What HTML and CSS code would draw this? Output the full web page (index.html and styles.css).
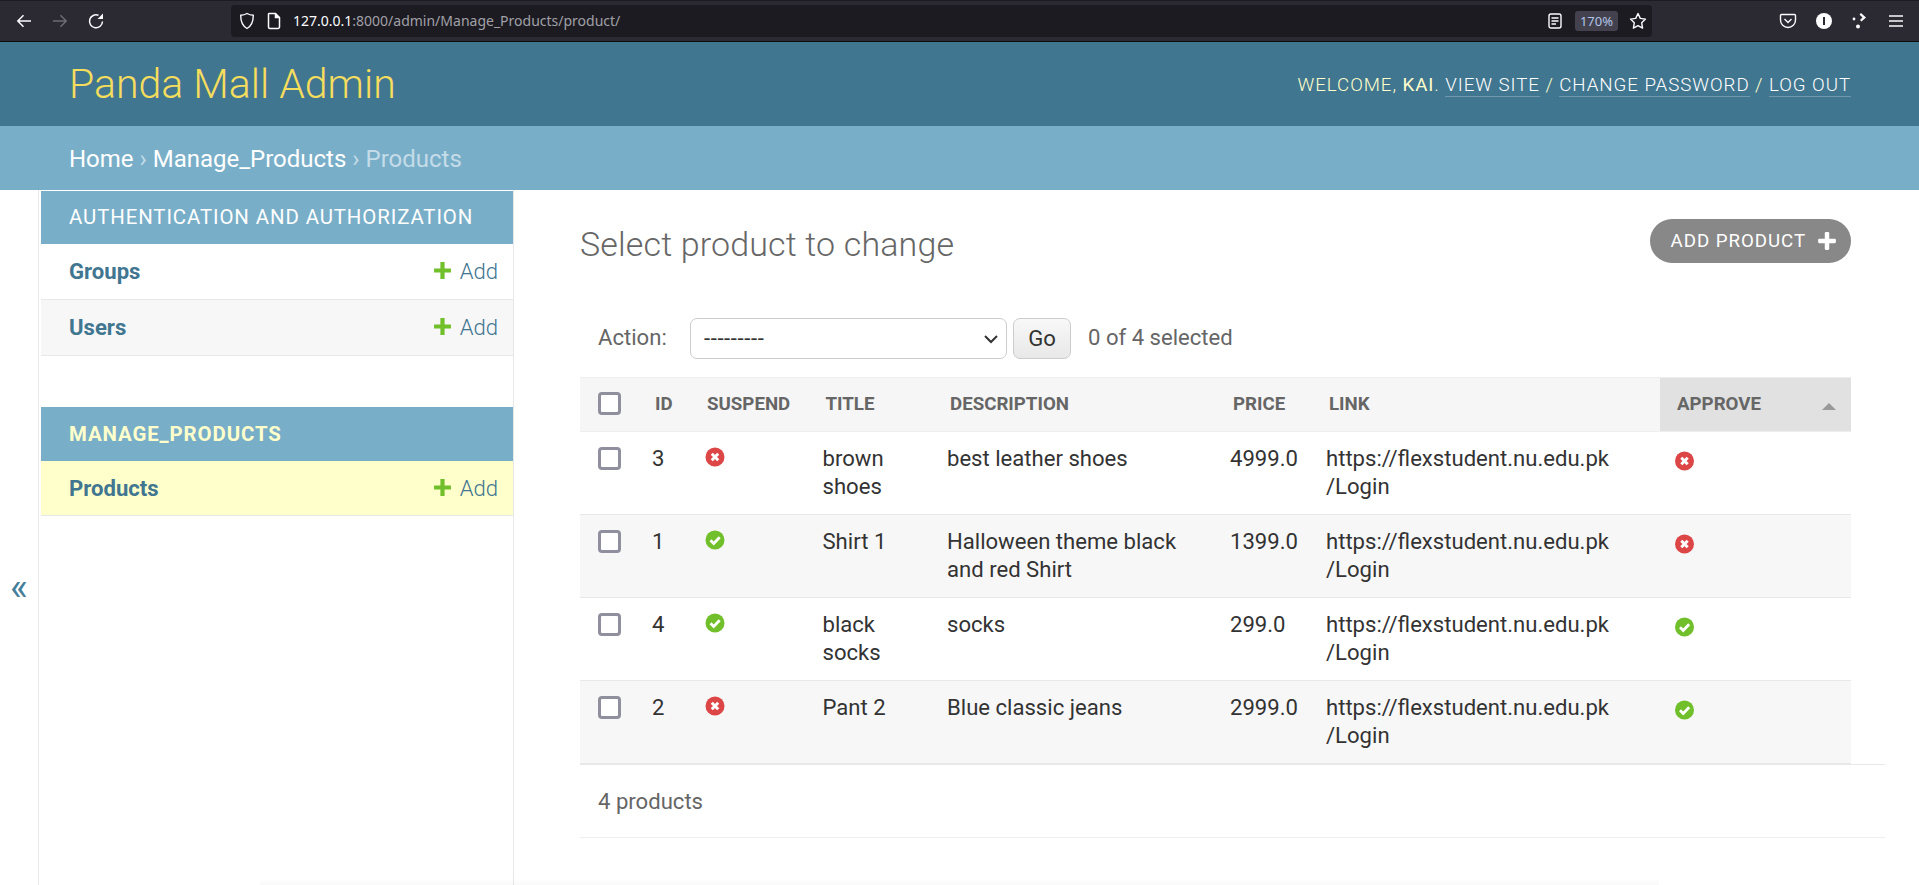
FILE: index.html
```html
<!DOCTYPE html>
<html lang="en">
<head>
  <meta charset="utf-8" />
  <title>Select product to change | Panda Mall Admin</title>
  <link rel="stylesheet" href="styles.css">
</head>
<body>
  <div class="browser-bar">
    <svg class="tb-icon" width="18" height="18" viewBox="0 0 18 18" fill="none" stroke="#fbfbfe" stroke-width="1.5"><path d="M16 9H3M8.5 3.2 2.8 9l5.7 5.8"/></svg>
    <svg class="tb-icon" width="18" height="18" viewBox="0 0 18 18" fill="none" stroke="#6d6c74" stroke-width="1.5"><path d="M2 9h13M9.5 3.2 15.2 9l-5.700 5.800"/></svg>
    <svg class="tb-icon" width="18" height="18" viewBox="0 0 18 18" fill="none" stroke="#fbfbfe" stroke-width="1.500"><path d="M15.500 9.500A6.500 6.500 0 1 1 11.500 3.300"/><path d="M16 1.500V7h-5.500z" fill="#fbfbfe" stroke="none"/></svg>
    <div class="url-bar">
      <svg width="16" height="18" viewBox="0 0 16 18" fill="none" stroke="#fbfbfe" stroke-width="1.400"><path d="M8 1.500c2 1.200 4 1.700 6.300 1.800 0 6-1.300 10.500-6.300 13.200C3 13.800 1.700 9.300 1.700 3.300 4 3.200 6 2.700 8 1.500z"/></svg>
      <svg class="page-icon" width="14" height="18" viewBox="0 0 14 18" fill="none" stroke="#fbfbfe" stroke-width="1.500"><path d="M2 1.500h6.500l4 4V15a1.500 1.500 0 0 1-1.500 1.500H3A1.500 1.500 0 0 1 1.500 15V2z"/><path d="M8.500 1.500v4h4" fill="#fbfbfe"/></svg>
      <span class="url-text"><b>127.0.0.1</b>:8000/admin/Manage_Products/product/</span>
      <svg class="reader-icon" width="14" height="18" viewBox="0 0 14 18" fill="none" stroke="#fbfbfe" stroke-width="1.400"><rect x="1" y="2" width="12" height="14" rx="2"/><path d="M3.500 6h7M3.500 9h7M3.500 12h4.500"/></svg>
      <span class="zoom-pill">170%</span>
      <svg class="star-icon" width="18" height="18" viewBox="0 0 18 18" fill="none" stroke="#fbfbfe" stroke-width="1.400" stroke-linejoin="round"><path d="m9 1.500 2.300 4.900 5.200.7-3.800 3.700.9 5.300L9 13.600l-4.600 2.500.9-5.300L1.500 7.100l5.200-.7z"/></svg>
    </div>
    <div class="tb-right">
      <svg width="18" height="18" viewBox="0 0 18 18" fill="none" stroke="#fbfbfe" stroke-width="1.400"><path d="M2.500 2.500h13a1 1 0 0 1 1 1V8A7.500 7.500 0 0 1 1.500 8V3.500a1 1 0 0 1 1-1z"/><path d="m5.500 7 3.500 3.500L12.500 7"/></svg>
      <svg width="18" height="18" viewBox="0 0 18 18"><circle cx="9" cy="9" r="8" fill="#fff"/><rect x="8" y="5" width="2" height="8" fill="#2b2a33"/></svg>
      <svg width="18" height="18" viewBox="0 0 18 18" fill="#fbfbfe"><path d="m10 1 5 4.500-4.500 4-1.500-1.500 2.500-2.500L8.500 2.500z"/><circle cx="3" cy="7" r="1.400"/><circle cx="7" cy="14.500" r="2"/></svg>
      <svg width="18" height="18" viewBox="0 0 18 18" stroke="#fbfbfe" stroke-width="1.500"><path d="M2 4h14M2 9h14M2 14h14"/></svg>
    </div>
  </div>

  <header class="site-header">
    <h1 class="site-name">Panda Mall Admin</h1>
    <div class="user-tools">
      Welcome, <strong>Kai</strong>. <a href="#">View site</a> / <a href="#">Change password</a> / <a href="#">Log out</a>
    </div>
  </header>

  <div class="breadcrumbs">
    <a href="#">Home</a> <span class="sep">›</span> <a href="#">Manage_Products</a> <span class="sep">›</span> Products
  </div>

  <div class="layout">
    <button class="nav-toggle" type="button">«</button>

    <nav class="sidebar">
      <div class="module">
        <div class="caption">Authentication and Authorization</div>
        <div class="nav-row">
          <a class="nav-link" href="#">Groups</a>
          <a class="add-link" href="#">
            <svg class="plus" viewBox="0 0 18 18"><path d="M7 1h4v6h6v4h-6v6H7v-6H1V7h6z"/></svg>Add</a>
        </div>
        <div class="nav-row alt">
          <a class="nav-link" href="#">Users</a>
          <a class="add-link" href="#">
            <svg class="plus" viewBox="0 0 18 18"><path d="M7 1h4v6h6v4h-6v6H7v-6H1V7h6z"/></svg>Add</a>
        </div>
      </div>
      <div class="module current">
        <div class="caption">Manage_Products</div>
        <div class="nav-row selected">
          <a class="nav-link" href="#">Products</a>
          <a class="add-link" href="#">
            <svg class="plus" viewBox="0 0 18 18"><path d="M7 1h4v6h6v4h-6v6H7v-6H1V7h6z"/></svg>Add</a>
        </div>
      </div>
    </nav>

    <main class="content">
      <div class="title-row">
        <h2 class="page-title">Select product to change</h2>
        <a class="add-button" href="#">Add product
          <svg class="plus-white" viewBox="0 0 18 18"><path d="M7 1.500a1 1 0 0 1 1-.500h2a1 1 0 0 1 1 1V7h5a1 1 0 0 1 1 1v2a1 1 0 0 1-1 1h-5v5a1 1 0 0 1-1 1H8a1 1 0 0 1-1-1v-5H2a1 1 0 0 1-1-1V8a1 1 0 0 1 1-1h5z"/></svg>
        </a>
      </div>

      <div class="actions">
        <label class="action-label">Action:</label>
        <span class="select-wrap">
          <select class="action-select"><option>---------</option></select>
          <svg class="select-arrow" width="14" height="9" viewBox="0 0 14 9" fill="none" stroke="#333" stroke-width="2"><path d="m1 1 6 6 6-6"/></svg>
        </span>
        <button class="go-button" type="button">Go</button>
        <span class="selected-count">0 of 4 selected</span>
      </div>

      <table class="results">
        <colgroup>
          <col class="c-check"><col class="c-id"><col class="c-suspend"><col class="c-title">
          <col class="c-desc"><col class="c-price"><col class="c-link"><col class="c-approve">
        </colgroup>
        <thead>
          <tr>
            <th><input class="check" type="checkbox"></th>
            <th>ID</th>
            <th>Suspend</th>
            <th>Title</th>
            <th>Description</th>
            <th>Price</th>
            <th>Link</th>
            <th class="sorted">Approve<span class="sort-arrow"></span></th>
          </tr>
        </thead>
        <tbody>
          <tr>
            <td><input class="check" type="checkbox"></td>
            <td>3</td>
            <td><svg class="bool" viewBox="0 0 20 20"><use href="#icon-no"/></svg></td>
            <td>brown shoes</td>
            <td>best leather shoes</td>
            <td>4999.0</td>
            <td>https://flexstudent.nu.edu.pk<wbr>/Login</td>
            <td><svg class="bool low" viewBox="0 0 20 20"><use href="#icon-no"/></svg></td>
          </tr>
          <tr class="alt">
            <td><input class="check" type="checkbox"></td>
            <td>1</td>
            <td><svg class="bool" viewBox="0 0 20 20"><use href="#icon-yes"/></svg></td>
            <td>Shirt 1</td>
            <td>Halloween theme black and red Shirt</td>
            <td>1399.0</td>
            <td>https://flexstudent.nu.edu.pk<wbr>/Login</td>
            <td><svg class="bool low" viewBox="0 0 20 20"><use href="#icon-no"/></svg></td>
          </tr>
          <tr>
            <td><input class="check" type="checkbox"></td>
            <td>4</td>
            <td><svg class="bool" viewBox="0 0 20 20"><use href="#icon-yes"/></svg></td>
            <td>black socks</td>
            <td>socks</td>
            <td>299.0</td>
            <td>https://flexstudent.nu.edu.pk<wbr>/Login</td>
            <td><svg class="bool low" viewBox="0 0 20 20"><use href="#icon-yes"/></svg></td>
          </tr>
          <tr class="alt">
            <td><input class="check" type="checkbox"></td>
            <td>2</td>
            <td><svg class="bool" viewBox="0 0 20 20"><use href="#icon-no"/></svg></td>
            <td>Pant 2</td>
            <td>Blue classic jeans</td>
            <td>2999.0</td>
            <td>https://flexstudent.nu.edu.pk<wbr>/Login</td>
            <td><svg class="bool low" viewBox="0 0 20 20"><use href="#icon-yes"/></svg></td>
          </tr>
        </tbody>
      </table>

      <p class="paginator">4 products</p>
    </main>
  </div>

  <div class="bottom-shade"></div>

  <svg class="icon-defs" width="0" height="0">
    <symbol id="icon-no" viewBox="0 0 20 20">
      <circle cx="10" cy="10" r="9.500" fill="#dd4646"/>
      <path d="m6.800 6.800 6.400 6.400m0-6.400-6.400 6.400" stroke="#fff" stroke-width="3"/>
    </symbol>
    <symbol id="icon-yes" viewBox="0 0 20 20">
      <circle cx="10" cy="10" r="9.500" fill="#70bf2b"/>
      <path d="m5.500 10.300 3.200 3.200 6-6.300" fill="none" stroke="#fff" stroke-width="2.800"/>
    </symbol>
  </svg>
</body>
</html>
```

FILE: styles.css
```css
* {
  box-sizing: border-box;
  margin: 0;
  padding: 0;
}

html, body {
  height: 885px;
  overflow: hidden;
}

body {
  position: relative;
  display: flex;
  flex-direction: column;
  font-family: Roboto, 'Liberation Sans', sans-serif;
  font-size: 22.1px;
  color: #333;
  background: #fff;
}

a {
  text-decoration: none;
}

/* browser chrome */
.browser-bar {
  display: flex;
  align-items: center;
  flex: none;
  height: 42px;
  padding: 0 14px 1px 15px;
  background: #2b2a33;
  border-top: 1px solid #1c1b22;
  border-bottom: 1px solid #0c0c0d;
}

.tb-icon {
  margin-right: 18px;
}

.url-bar {
  display: flex;
  align-items: center;
  flex: none;
  width: 1421px;
  height: 32px;
  margin-left: 108px;
  padding: 0 5px 0 8px;
  background: #1c1b22;
  border-radius: 4px;
  font-family: 'Noto Sans', sans-serif;
  font-size: 14px;
  color: #a0a0a6;
}

.page-icon {
  margin-left: 12px;
}

.url-text {
  margin-left: 12px;
  flex: 1;
}

.url-text b {
  font-weight: 400;
  color: #fbfbfe;
}

.zoom-pill {
  width: 43px;
  height: 20px;
  margin: 0 11px 0 13px;
  line-height: 20px;
  text-align: center;
  font-size: 13px;
  color: #b3c5ea;
  background: #42414d;
  border-radius: 3px;
}

.tb-right {
  display: flex;
  gap: 18px;
  margin-left: 127px;
}

/* header */
.site-header {
  display: flex;
  align-items: center;
  justify-content: space-between;
  flex: none;
  height: 84px;
  padding: 0 68px 0 69px;
  background: #417690;
}

.site-name {
  font-size: 41px;
  font-weight: 300;
  color: #f5dd5d;
}

.user-tools {
  padding-top: 2px;
  font-size: 18.7px;
  font-weight: 300;
  letter-spacing: .95px;
  text-transform: uppercase;
  color: #ffc;
}

.user-tools strong {
  font-weight: 400;
}

.user-tools a {
  color: #fff;
  border-bottom: 1px solid rgba(255, 255, 255, .25);
}

.breadcrumbs {
  flex: none;
  height: 64px;
  padding-left: 69px;
  line-height: 66px;
  font-size: 24px;
  color: #c4dce8;
  background: #79aec8;
}

.breadcrumbs a {
  color: #fff;
}

/* page layout */
.layout {
  display: flex;
  flex: 1;
  min-height: 0;
}

.nav-toggle {
  flex: none;
  width: 39px;
  padding-top: 99px;
  font-family: Roboto, sans-serif;
  font-size: 38px;
  line-height: 1;
  color: #447e9b;
  background: #fff;
  border: 0;
  border-right: 1px solid #e8e8e8;
  cursor: pointer;
}

.sidebar {
  flex: none;
  width: 475px;
  padding: 1px 0 0 2px;
  border-right: 1px solid #e8e8e8;
}

.module {
  margin-bottom: 51px;
}

.caption {
  height: 53px;
  padding-left: 28px;
  line-height: 53px;
  font-size: 20.4px;
  letter-spacing: .9px;
  text-transform: uppercase;
  color: #fff;
  background: #79aec8;
}

.module.current .caption {
  height: 54px;
  line-height: 54px;
  font-weight: 700;
  color: #ffc;
}

.nav-row {
  display: flex;
  align-items: center;
  justify-content: space-between;
  height: 56px;
  padding: 0 15px 2px 28px;
  border-bottom: 1px solid #e8e8e8;
}

.nav-row.alt {
  background: #f7f7f7;
}

.nav-row.selected {
  height: 55px;
  padding-bottom: 1px;
  background: #ffc;
}

.nav-link {
  font-weight: 700;
  color: #417690;
}

.add-link {
  display: flex;
  align-items: center;
  gap: 8px;
  font-weight: 300;
  color: #417690;
}

.plus {
  width: 19px;
  height: 19px;
  fill: #70bf2b;
}

/* content */
.content {
  flex: 1;
  min-width: 0;
  padding: 29px 34px 0 66px;
}

.title-row {
  display: flex;
  align-items: flex-start;
  justify-content: space-between;
  padding-right: 34px;
}

.page-title {
  font-size: 34px;
  font-weight: 300;
  line-height: 50px;
  letter-spacing: .15px;
  color: #666;
}

.add-button {
  display: flex;
  align-items: center;
  gap: 11px;
  height: 44px;
  padding: 0 14px 0 21px;
  font-size: 18.7px;
  font-weight: 400;
  letter-spacing: .95px;
  text-transform: uppercase;
  color: #fff;
  background: #888;
  border-radius: 25px;
}

.plus-white {
  width: 20px;
  height: 20px;
  fill: #fff;
}

.actions {
  display: flex;
  align-items: center;
  height: 42px;
  margin-top: 48px;
  padding-left: 18px;
  color: #666;
}

.action-label {
  width: 92px;
  margin-top: -2px;
}

.select-wrap {
  position: relative;
  display: block;
  height: 41px;
}

.action-select {
  display: block;
  width: 317px;
  height: 41px;
  padding-left: 13px;
  appearance: none;
  font-family: Roboto, sans-serif;
  font-size: 22.1px;
  letter-spacing: .6px;
  color: #333;
  background: #fff;
  border: 1px solid #ccc;
  border-radius: 7px;
}

.select-arrow {
  position: absolute;
  top: 17px;
  right: 9px;
}

.go-button {
  width: 58px;
  height: 41px;
  margin-left: 6px;
  font-family: Roboto, sans-serif;
  font-size: 22.1px;
  color: #333;
  background: linear-gradient(#f8f8f8, #e8e8e8);
  border: 1px solid #ccc;
  border-radius: 7px;
}

.selected-count {
  margin-left: 17px;
  margin-top: -3px;
}

.results {
  width: 1271px;
  margin-top: 18px;
  table-layout: fixed;
  border-collapse: collapse;
}

.c-check { width: 58px; }
.c-id { width: 52px; }
.c-suspend { width: 118.5px; }
.c-title { width: 124.5px; }
.c-desc { width: 283px; }
.c-price { width: 96px; }
.c-link { width: 348px; }
.c-approve { width: 191px; }

.results thead tr {
  height: 54px;
  background: #f6f6f6;
  border-top: 1px solid #eee;
  border-bottom: 1px solid #eee;
}

.results th {
  position: relative;
  padding: 0 0 2px 17px;
  text-align: left;
  font-size: 18.7px;
  font-weight: 700;
  text-transform: uppercase;
  color: #666;
}

.results th.sorted {
  background: #e1e1e1;
}

.sort-arrow {
  position: absolute;
  top: 25px;
  right: 15px;
  border-left: 7px solid transparent;
  border-right: 7px solid transparent;
  border-bottom: 7px solid #999;
}

.results tbody tr {
  height: 83px;
  border-bottom: 1px solid #e8e8e8;
}

.results tbody tr.alt {
  background: #f7f7f7;
}

.results td {
  padding: 12px 14px 0;
  vertical-align: top;
  line-height: 28px;
}

.check {
  display: block;
  width: 23px;
  height: 23px;
  margin: 3px 0 0 4px;
  appearance: none;
  border: 3px solid #8f8f9d;
  border-radius: 4px;
  background: #fff;
}

.results th .check {
  margin: 0 0 0 1px;
}

.bool {
  display: block;
  width: 20px;
  height: 20px;
  margin: 3px 0 0 1px;
}

.bool.low {
  width: 21px;
  margin: 7px 0 0;
}

.paginator {
  width: 1305px;
  height: 74px;
  padding-left: 18px;
  line-height: 72px;
  color: #666;
  border-top: 1px solid #e8e8e8;
  border-bottom: 1px solid #eee;
}

/* faint status panel edge at the very bottom of the window */
.bottom-shade {
  position: absolute;
  left: 260px;
  bottom: 0;
  width: 1399px;
  height: 7px;
  background: linear-gradient(rgba(0, 0, 0, 0), rgba(0, 0, 0, .025));
}

.icon-defs {
  position: absolute;
}
```
